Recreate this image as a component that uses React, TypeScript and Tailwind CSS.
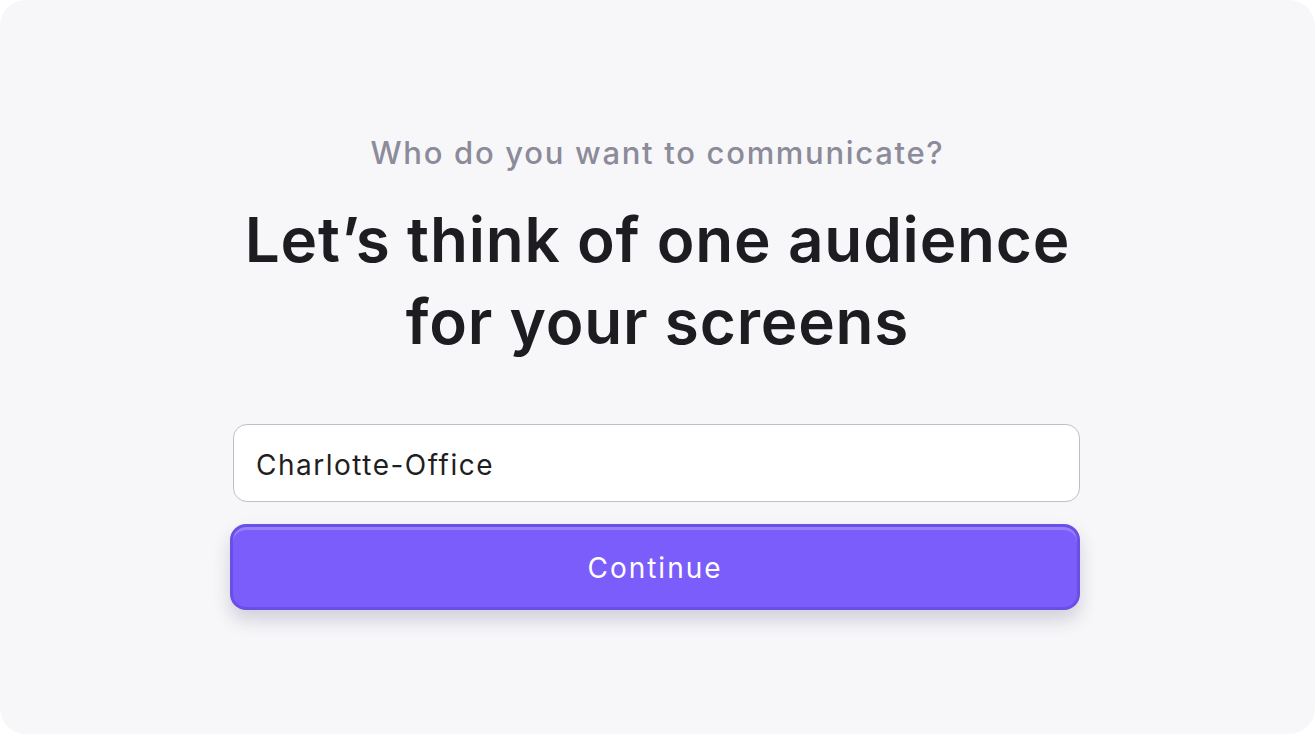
export default function App() {
  return (
    <div className="w-[1315px] h-[734px] bg-white">
      <div
        className="w-full h-full rounded-[26px] bg-[#f7f7f9] flex flex-col items-center pt-[135px]"
        style={{ fontFamily: "Inter, 'Noto Sans', sans-serif" }}
      >
        <p className="text-[31px] leading-[36px] font-medium text-[#8b8b99] tracking-[1.7px]">
          Who do you want to communicate?
        </p>
        <h1 className="mt-[28px] text-center text-[62px] leading-[82px] font-semibold text-[#1d1d21] tracking-[0.8px]">
          Let’s think of one audience
          <br />
          for your screens
        </h1>
        <div className="mt-[61px] mr-[5px] w-[850px] flex flex-col">
          <div className="ml-[3px] h-[78px] rounded-[14px] border-[1.5px] border-[#bfbfc5] bg-white flex items-center px-[22px] pt-[4px]">
            <span className="text-[28px] text-[#1f1f23] tracking-[1.5px]">Charlotte-Office</span>
          </div>
          <button className="mt-[22px] h-[86px] rounded-[16px] border-[3px] border-[#6a4fe6] bg-[#7b5dfb] shadow-[inset_0_3px_0_rgba(255,255,255,0.22),0_10px_18px_rgba(40,30,80,0.18)] flex items-center justify-center pt-[2px]">
            <span className="text-[28px] text-white tracking-[2px]">Continue</span>
          </button>
        </div>
      </div>
    </div>
  );
}
